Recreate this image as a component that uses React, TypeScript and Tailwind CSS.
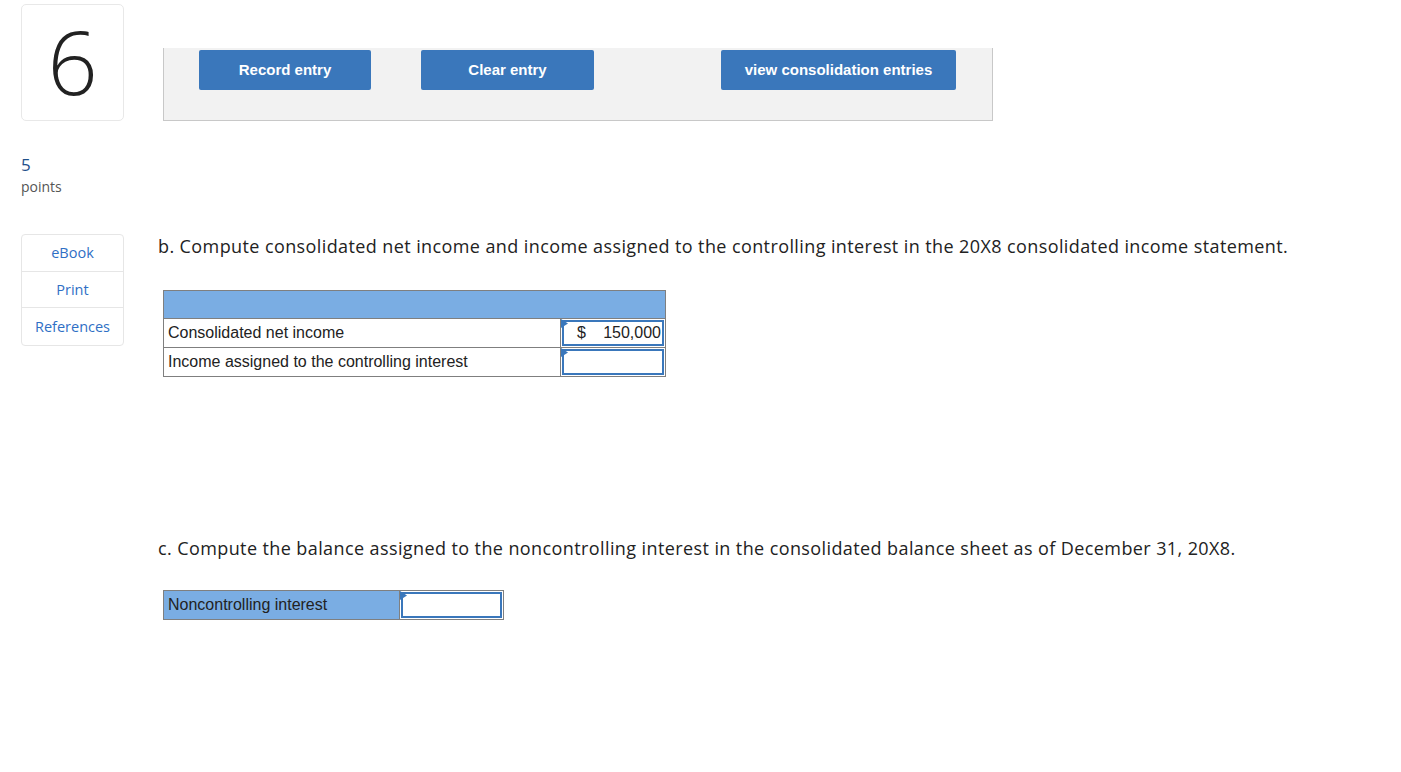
import React from "react";

const Flag = () => (
  <svg className="absolute left-0 top-0" width="7" height="9" viewBox="0 0 7 9">
    <polygon points="0,0 7,4.5 0,9" fill="#3a77bb" />
  </svg>
);

const InputCell = ({ children }: { children?: React.ReactNode }) => (
  <div className="relative h-full w-full p-[1px]">
    <div className="h-full w-full border-2 border-[#3a77bb] bg-white flex items-center justify-end pr-[1px] text-[16px]">
      {children}
    </div>
    <Flag />
  </div>
);

export default function App() {
  const sans = { fontFamily: "'Open Sans', Lato, sans-serif" };
  const arial = { fontFamily: "'Liberation Sans', Arial, sans-serif" };
  return (
    <div className="bg-white w-[1401px] h-[772px] pt-[4px] text-[#333]" style={sans}>
      <div className="flex items-end">
        <div className="ml-[21px] w-[103px] h-[117px] border border-[#e8e8e8] rounded-[5px] flex items-center justify-center">
          <span className="text-[88px] leading-none font-light text-[#222] -mt-[4px]">6</span>
        </div>
        <div className="ml-[39px] w-[830px] h-[73px] bg-[#f2f2f2] border-l border-r border-b border-[#c8c8c8] pt-[2px] flex" style={arial}>
          <button className="ml-[35px] w-[172px] h-[40px] bg-[#3a77bb] rounded-[2px] text-white font-bold text-[15px]">Record entry</button>
          <button className="ml-[50px] w-[173px] h-[40px] bg-[#3a77bb] rounded-[2px] text-white font-bold text-[15px]">Clear entry</button>
          <button className="ml-[127px] w-[235px] h-[40px] bg-[#3a77bb] rounded-[2px] text-white font-bold text-[15px]">view consolidation entries</button>
        </div>
      </div>

      <div className="flex">
        <div className="ml-[21px] w-[103px] shrink-0">
          <div className="mt-[34px] text-[17px] leading-[20px] text-[#1f4f8a]">5</div>
          <div className="mt-[2px] text-[14px] leading-[20px] text-[#555]">points</div>
          <div className="mt-[37px] border border-[#e6e6e6] rounded-[4px] text-[14.5px] text-[#2f6fc5]">
            <div className="h-[37px] flex items-center justify-center border-b border-[#e6e6e6]">eBook</div>
            <div className="h-[36px] flex items-center justify-center border-b border-[#e6e6e6]">Print</div>
            <div className="h-[37px] flex items-center justify-center">References</div>
          </div>
        </div>

        <div className="ml-[34px]">
          <div className="mt-[113px] text-[18px] leading-[24px] tracking-[0.4px] text-[#222]">
            b. Compute consolidated net income and income assigned to the controlling interest in the 20X8 consolidated income statement.
          </div>

          <div className="ml-[5px] mt-[32px] w-[503px] border border-[#7f7f7f] text-[16px] text-[#222]" style={arial}>
            <div className="h-[28px] bg-[#7aade3] border-b border-[#7f7f7f]" />
            <div className="flex h-[29px] border-b border-[#7f7f7f]">
              <div className="w-[397px] border-r border-[#7f7f7f] flex items-center pl-[4px]">Consolidated net income</div>
              <div className="flex-1">
                <InputCell>
                  <span className="flex w-full justify-between pl-[13px]"><span>$</span><span>150,000</span></span>
                </InputCell>
              </div>
            </div>
            <div className="flex h-[28px]">
              <div className="w-[397px] border-r border-[#7f7f7f] flex items-center pl-[4px]">Income assigned to the controlling interest</div>
              <div className="flex-1">
                <InputCell />
              </div>
            </div>
          </div>

          <div className="mt-[159px] text-[18px] leading-[24px] tracking-[0.4px] text-[#222]">
            c. Compute the balance assigned to the noncontrolling interest in the consolidated balance sheet as of December 31, 20X8.
          </div>

          <div className="ml-[5px] mt-[30px] w-[341px] h-[30px] border border-[#7f7f7f] flex text-[16px] text-[#222]" style={arial}>
            <div className="w-[236px] bg-[#7aade3] border-r border-[#7f7f7f] flex items-center pl-[4px]">Noncontrolling interest</div>
            <div className="flex-1">
              <InputCell />
            </div>
          </div>
        </div>
      </div>
    </div>
  );
}
